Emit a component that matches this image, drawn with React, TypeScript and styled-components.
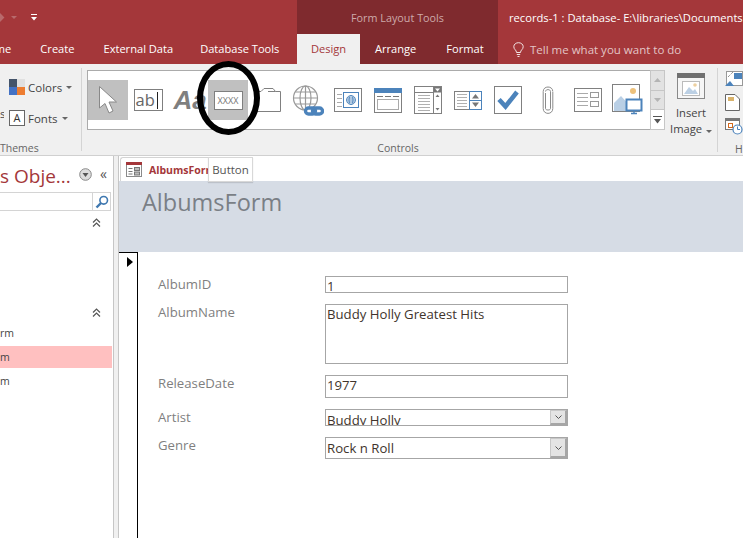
import * as React from 'react';
import styled, { createGlobalStyle } from 'styled-components';

const RED = '#a4373a';
const DARK_RED = '#7f2a2e';
const RIBBON = '#f0f0f0';
const GREY = '#7f7f7f';
const BLUE = '#4c83bb';

const Global = createGlobalStyle`
  html, body { margin: 0; padding: 0; background: #fff; }
  body { font-family: "Open Sans", "Noto Sans", "Liberation Sans", sans-serif; }
`;

const Page = styled.div`
  position: relative;
  width: 743px;
  height: 538px;
  overflow: hidden;
  display: flex;
  flex-direction: column;
`;

// red title bar + tabs
const TitleArea = styled.div`
  height: 64px;
  flex: none;
  background: ${RED};
  display: grid;
  grid-template-columns: 297px 201px 1fr;
  grid-template-rows: 34px 30px;
  color: #fff;
  overflow: hidden;
`;

const QuickAccess = styled.div`
  display: flex;
  align-items: center;
  padding-left: 29px;
`;

const FadedDiamond = styled.span`
  width: 7px;
  height: 7px;
  margin-left: -33px;
  background: #b86a6c;
  transform: rotate(45deg);
`;

const FadedCaret = styled.span`
  margin: 1px 14px 0 8px;
  border: 3px solid transparent;
  border-top: 3px solid #b86a6c;
  border-bottom: 0;
`;

const ContextTitle = styled.div`
  background: ${DARK_RED};
  color: #cda9aa;
  font-size: 10.8px;
  display: flex;
  align-items: center;
  justify-content: center;
`;

const WindowTitle = styled.div`
  display: flex;
  align-items: center;
  padding-left: 11px;
  font-size: 11.2px;
  white-space: nowrap;
  overflow: hidden;
`;

const TabRow = styled.div<{ $dark?: boolean }>`
  display: flex;
  align-items: center;
  background: ${({ $dark }) => ($dark ? DARK_RED : 'transparent')};
  white-space: nowrap;
  overflow: hidden;
`;

const Tab = styled.div<{ $left: number }>`
  margin-left: ${({ $left }) => $left}px;
  font-size: 11.1px;
  line-height: 30px;
`;

const ActiveTab = styled.div`
  width: 63px;
  height: 30px;
  background: ${RIBBON};
  color: ${RED};
  text-align: center;
  line-height: 30px;
  font-size: 11.1px;
`;

const TellMe = styled.div`
  display: flex;
  align-items: center;
  gap: 6px;
  margin-left: 15px;
  color: #e3c5c6;
  font-size: 11.5px;
`;

// ribbon
const Ribbon = styled.div`
  height: 92px;
  flex: none;
  background: ${RIBBON};
  border-bottom: 1px solid #d0d0d0;
  box-sizing: border-box;
  display: flex;
  color: #444;
  font-size: 11.5px;
  overflow: hidden;
`;

const ThemesGroup = styled.div`
  width: 82px;
  flex: none;
  margin: 4px 0;
  border-right: 1px solid #d4d4d4;
  box-sizing: border-box;
  display: flex;
  flex-direction: column;
  padding-left: 9px;
`;

const ThemeRow = styled.div<{ $top: number }>`
  display: flex;
  align-items: center;
  gap: 3px;
  height: 16px;
  margin-top: ${({ $top }) => $top}px;
`;

const ThemesStub = styled.span`
  width: 4px;
  margin: -10px 2px 0 -9px;
  overflow: hidden;
`;

const Caret = styled.span`
  display: inline-block;
  border: 3px solid transparent;
  border-top: 3px solid #666;
  border-bottom: 0;
  margin-left: 1px;
`;

const GroupLabel = styled.div`
  color: #666;
  font-size: 10.5px;
  line-height: 14px;
`;

const ThemesLabel = styled(GroupLabel)`
  margin-top: auto;
  margin-bottom: -4px;
  margin-left: -9px;
`;

const ControlsGroup = styled.div`
  width: 578px;
  flex: none;
  margin-left: 5px;
  display: flex;
  flex-direction: column;
  padding-top: 6px;
`;

const GalleryRow = styled.div`
  display: flex;
  height: 60px;
`;

const Gallery = styled.div`
  width: 563px;
  box-sizing: border-box;
  background: #fff;
  border: 1px solid #ababab;
  border-right: 0;
  display: flex;
  align-items: center;
`;

const Cell = styled.div<{ $selected?: boolean }>`
  position: relative;
  width: 40px;
  height: 40px;
  flex: none;
  display: flex;
  align-items: center;
  justify-content: center;
  background: ${({ $selected }) => ($selected ? '#c0c0c0' : 'transparent')};
`;

const LabelControl = styled.span`
  font-family: "Liberation Sans", sans-serif;
  font-size: 26px;
  font-weight: bold;
  font-style: italic;
  color: #7f7f7f;
  white-space: nowrap;
  margin-left: 4px;
`;

const TextBoxIcon = styled.div`
  width: 29px;
  height: 22px;
  border: 1px solid #7f7f7f;
  box-sizing: border-box;
  background: #fff;
  display: flex;
  align-items: center;
  padding-left: 1px;
  color: #666;
  font-size: 16.5px;
  line-height: 20px;
`;

const Cursor = styled.span`
  width: 1px;
  height: 17px;
  margin-left: 2px;
  background: #222;
`;

const ButtonIcon = styled.div`
  width: 29px;
  height: 19px;
  border: 1px solid #7f7f7f;
  box-sizing: border-box;
  background: #fff;
  display: flex;
  align-items: center;
  justify-content: center;
  color: #777;
  font-size: 9px;
`;

const ScrollColumn = styled.div`
  width: 15px;
  display: flex;
  flex-direction: column;
  border: 1px solid #c6c6c6;
  box-sizing: border-box;
`;

const ScrollButton = styled.div<{ $white?: boolean }>`
  flex: 1;
  display: flex;
  align-items: center;
  justify-content: center;
  background: ${({ $white }) => ($white ? '#fff' : '#e2e2e2')};
  border-bottom: 1px solid #c6c6c6;
  &:last-child { border-bottom: 0; }
`;

const ControlsLabel = styled(GroupLabel)`
  text-align: center;
  margin-top: 11px;
  padding-left: 44px;
`;

const ImageGroup = styled.div`
  width: 52px;
  flex: none;
  display: flex;
  flex-direction: column;
  align-items: center;
  padding-top: 9px;
  font-size: 11.2px;
  line-height: 16px;
`;

const ImageText = styled.div`
  margin-top: 6px;
  text-align: center;
  white-space: nowrap;
`;

const HeaderGroup = styled.div`
  margin: 4px 0 3px;
  padding: 2px 0 0 7px;
  flex: 1;
  border-left: 1px solid #d4d4d4;
  display: flex;
  flex-direction: column;
  gap: 7px;
`;

const HLabel = styled(GroupLabel)`
  margin-left: 10px;
`;

// below the ribbon
const Body = styled.div`
  flex: 1;
  min-height: 0;
  display: flex;
`;

const NavPane = styled.div`
  width: 113px;
  flex: none;
  background: #fff;
  display: flex;
  flex-direction: column;
`;

const NavHeader = styled.div`
  height: 36px;
  display: flex;
  align-items: center;
  color: ${RED};
  font-size: 19px;
  white-space: nowrap;
`;

const NavTitle = styled.span`
  width: 79px;
  margin-top: 4px;
  overflow: hidden;
`;

const ShutterChevrons = styled.span`
  margin-left: 8px;
  color: #555;
  font-size: 14px;
  line-height: 14px;
`;

const SearchBox = styled.div`
  height: 19px;
  width: 111px;
  box-sizing: border-box;
  border: 1px solid #d4d4d4;
  border-left: 0;
  display: flex;
  justify-content: flex-end;
`;

const SearchButton = styled.div`
  width: 17px;
  border-left: 1px solid #d4d4d4;
  display: flex;
  align-items: center;
  justify-content: center;
`;

const NavSection = styled.div<{ $height: number }>`
  height: ${({ $height }) => $height}px;
  display: flex;
  justify-content: flex-end;
  padding: 7px 12px 0 0;
  box-sizing: border-box;
`;

const NavItem = styled.div<{ $selected?: boolean }>`
  height: 22px;
  width: 112px;
  margin-bottom: 2px;
  background: ${({ $selected }) => ($selected ? '#ffc0c0' : 'transparent')};
  color: #444;
  font-size: 10.5px;
  line-height: 22px;
`;

const Splitter = styled.div`
  width: 6px;
  flex: none;
  box-sizing: border-box;
  background: #f0f0f0;
  border-left: 1px solid #c6c6c6;
  border-right: 1px solid #c6c6c6;
`;

const Document = styled.div`
  flex: 1;
  min-width: 0;
  display: flex;
  flex-direction: column;
`;

const DocTabs = styled.div`
  height: 25px;
  flex: none;
  padding: 1px 0 0 1px;
  box-sizing: border-box;
  display: flex;
`;

const DocTab = styled.div`
  width: 89px;
  box-sizing: border-box;
  border: 1px solid #d4d4d4;
  border-right: 0;
  border-bottom: 0;
  border-top-left-radius: 3px;
  display: flex;
  align-items: center;
  gap: 7px;
  padding-left: 5px;
  color: ${RED};
  font-size: 10.5px;
  font-weight: bold;
  white-space: nowrap;
  overflow: hidden;
`;

const FormHeader = styled.div`
  height: 71px;
  flex: none;
  background: #d6dce5;
  color: #7a7f86;
  font-size: 23.5px;
  line-height: 42px;
  padding-left: 23px;
`;

const FormDetail = styled.div`
  flex: 1;
  display: flex;
  min-height: 0;
`;

const RecordSelector = styled.div`
  width: 19px;
  flex: none;
  box-sizing: border-box;
  border-top: 1px solid #000;
  border-right: 1px solid #000;
  padding: 4px 0 0 8px;
`;

const Pointer = styled.div`
  width: 0;
  height: 0;
  border-left: 6px solid #000;
  border-top: 5px solid transparent;
  border-bottom: 5px solid transparent;
`;

const FieldGrid = styled.div`
  display: grid;
  grid-template-columns: 167px 243px;
  row-gap: 11px;
  align-content: start;
  padding: 24px 0 0 20px;
`;

const FieldLabel = styled.div`
  color: ${GREY};
  font-size: 13.2px;
  line-height: 17px;
`;

const FieldBox = styled.div<{ $height: number }>`
  height: ${({ $height }) => $height}px;
  box-sizing: border-box;
  border: 1px solid #a6a6a6;
  padding-left: 1px;
  color: #41342c;
  font-size: 13.2px;
  line-height: 18px;
  display: flex;
  justify-content: space-between;
  overflow: hidden;
`;

const FieldValue = styled.span<{ $drop: number }>`
  padding-top: ${({ $drop }) => $drop}px;
`;

const ComboButton = styled.div`
  width: 17px;
  flex: none;
  background: #e4e4e4;
  border: 1px solid #c8c8c8;
  border-right: 2px solid #a6a6a6;
  border-bottom: 2px solid #a6a6a6;
  box-sizing: border-box;
  display: flex;
  align-items: center;
  justify-content: center;
`;

// things lying over the page
const Tooltip = styled.div`
  position: absolute;
  left: 208px;
  top: 157px;
  width: 45px;
  height: 25px;
  box-sizing: border-box;
  background: #fff;
  border: 1px solid #d8d8d8;
  box-shadow: 0 1px 1px rgba(0, 0, 0, 0.12);
  color: #555;
  font-size: 11.5px;
  line-height: 24px;
  text-align: center;
`;

const HandDrawnOval = styled.div`
  position: absolute;
  left: 197px;
  top: 61px;
  width: 63px;
  height: 74px;
  box-sizing: border-box;
  border: 6px solid #000;
  border-radius: 50%;
`;

// icons
const Svg: React.FC<{ w: number; h: number; children: React.ReactNode }> = ({ w, h, children }) => (
  <svg width={w} height={h} viewBox={`0 0 ${w} ${h}`} style={{ display: 'block', flex: 'none' }}>
    {children}
  </svg>
);

const ArrowIcon = () => (
  <Svg w={20} h={30}>
    <path d="M1.5 1.5 V23 L7 18.5 L11 28 L15 26 L11 17 H18.5 Z" fill="#fff" stroke="#888" strokeWidth="1" />
  </Svg>
);

const TabIcon = () => (
  <Svg w={28} h={24}>
    <path d="M1.5 23.5 V3.5 H7 L10 .5 H19 L21.5 3.5 H26.5 V23.5 Z" fill="#fff" stroke="#808080" />
    <path d="M14 3.5 H21.5" stroke="#808080" fill="none" />
  </Svg>
);

const GlobeIcon = () => (
  <Svg w={32} h={32}>
    <g fill="none" stroke="#999" strokeWidth="1.2">
      <circle cx="13.5" cy="14" r="12" />
      <ellipse cx="13.5" cy="14" rx="5.5" ry="12" />
      <path d="M1.5 14 H25.5 M3.5 8 H23.5 M3.5 20 H23.5 M13.5 2 V26" />
    </g>
    <g fill="none" stroke={BLUE} strokeWidth="3.4">
      <rect x="13.5" y="24" width="10" height="6" rx="3" fill="#fff" />
      <rect x="20.5" y="24" width="10" height="6" rx="3" />
    </g>
  </Svg>
);

const WebBrowserIcon = () => (
  <Svg w={28} h={24}>
    <rect x=".5" y=".5" width="27" height="23" fill="#fff" stroke="#808080" />
    <path d="M3 6.5H8M3 10.5H8M3 14.5H8M3 18.5H8" stroke="#aaa" />
    <rect x="9.5" y="4.5" width="15" height="15" fill="#fff" stroke={BLUE} />
    <g fill="none" stroke={BLUE} strokeWidth=".9">
      <circle cx="17" cy="12" r="4.5" />
      <ellipse cx="17" cy="12" rx="2" ry="4.5" />
      <path d="M12.5 12H21.5M13 10H21M13 14H21" />
    </g>
  </Svg>
);

const NavControlIcon = () => (
  <Svg w={28} h={25}>
    <rect x=".5" y=".5" width="27" height="24" fill="#fff" stroke="#808080" />
    <rect x="0" y="0" width="28" height="5" fill={BLUE} />
    <path d="M3 8.5H9M11 8.5H17M19 8.5H25" stroke="#777" />
    <rect x="3.5" y="11.5" width="21" height="10" fill="#fff" stroke="#aaa" />
  </Svg>
);

const ListBoxIcon = () => (
  <Svg w={28} h={28}>
    <rect x=".5" y=".5" width="27" height="27" fill="#fff" stroke="#808080" />
    <path d="M1 6.5H19M19.5 1V27" stroke="#808080" />
    <rect x="20" y="1" width="7" height="5.5" fill="#777" />
    <path d="M21 2.5H26L23.5 5.5Z" fill="#fff" />
    <path d="M21.5 11L23.5 8.5L25.5 11ZM21.5 22L23.5 24.5L25.5 22Z" fill="#777" />
    <path d="M4 9.5H16M4 12.5H16M4 15.5H16M4 18.5H16M4 21.5H16M4 24.5H16" stroke="#b0b0b0" />
  </Svg>
);

const ComboIcon = () => (
  <Svg w={28} h={19}>
    <rect x=".5" y=".5" width="27" height="18" fill="#fff" stroke="#808080" />
    <path d="M3 3.5H13M3 6.5H13M3 9.5H13M3 12.5H13M3 15.5H13" stroke="#b0b0b0" />
    <rect x="15.5" y=".5" width="12" height="18" fill="#fff" stroke={BLUE} />
    <path d="M16 9.5H27" stroke={BLUE} />
    <path d="M18 7.5L21.5 3L25 7.5ZM18 11.5L21.5 16L25 11.5Z" fill="#777" />
  </Svg>
);

const CheckIcon = () => (
  <Svg w={28} h={28}>
    <rect x=".5" y=".5" width="27" height="27" fill="#fff" stroke="#808080" />
    <path d="M5 13.5L11.5 20.5L23 6" fill="none" stroke={BLUE} strokeWidth="4.6" />
  </Svg>
);

const ClipIcon = () => (
  <Svg w={12} h={28}>
    <path
      d="M3.5 7V22.5C3.5 24.5 8.5 24.5 8.5 22.5V5.5C8.5 3 3.5 3 3.5 5.5M10.8 6V22.5C10.8 29 1.2 29 1.2 22.5V5.5C1.2 -0.5 10.8 -0.5 10.8 5.5"
      fill="none"
      stroke="#8a8a8a"
    />
  </Svg>
);

const SubformIcon = () => (
  <Svg w={28} h={24}>
    <rect x=".5" y=".5" width="27" height="23" fill="#fff" stroke="#808080" />
    <path d="M3 5.5H14M3 9.5H14M3 13.5H14M3 17.5H14" stroke="#aaa" />
    <rect x="16.5" y="4.5" width="8" height="5" fill="#fff" stroke="#999" />
    <rect x="16.5" y="13.5" width="8" height="5" fill="#fff" stroke="#999" />
  </Svg>
);

const ObjectIcon = () => (
  <Svg w={32} h={32}>
    <rect x=".5" y=".5" width="27" height="27" fill="#fff" stroke="#808080" />
    <circle cx="21" cy="7" r="3" fill="#edc17b" />
    <path d="M2 27V19L9 12L20 24V27Z" fill="#b9cfe5" />
    <rect x="14.5" y="15.5" width="15" height="11" fill="#fff" stroke={BLUE} strokeWidth="2" />
    <path d="M19 29.5H25M22 27V30" stroke={BLUE} strokeWidth="1.4" />
  </Svg>
);

const InsertImageIcon = () => (
  <Svg w={28} h={26}>
    <rect x=".5" y=".5" width="27" height="25" fill="#f6f6f6" stroke="#8a8a8a" />
    <rect x="0" y="0" width="28" height="5" fill="#707070" />
    <rect x="5.5" y="8.5" width="17" height="14" fill="#fff" stroke="#bbb" />
    <circle cx="18" cy="12" r="1.8" fill="#edd0a0" />
    <path d="M7 21L12 14L16 18L18 16L21 21Z" fill="#bcd0e4" />
  </Svg>
);

const ThemeColorsIcon = () => (
  <Svg w={16} h={16}>
    <rect width="8" height="8" fill="#44546a" />
    <rect x="8" width="8" height="8" fill="#e0e0e0" />
    <rect y="8" width="8" height="8" fill="#4472c4" />
    <rect x="8" y="8" width="8" height="8" fill="#ed7d31" />
  </Svg>
);

const ThemeFontsIcon = styled.div`
  width: 16px;
  height: 16px;
  box-sizing: border-box;
  border: 1px solid #666;
  background: #fff;
  color: #333;
  font-size: 11px;
  line-height: 14px;
  text-align: center;
  flex: none;
`;

const LogoIcon = () => (
  <Svg w={19} h={17}>
    <rect x="1.5" y="1.5" width="16" height="14" fill="#fff" stroke="#999" />
    <rect x="9" y="3" width="8" height="6" fill={BLUE} />
    <path d="M0 16L5 11L9 16Z" fill={BLUE} />
    <path d="M3 7L8 2" stroke="#666" strokeDasharray="1 1" />
  </Svg>
);

const TitleIcon = () => (
  <Svg w={15} h={17}>
    <path d="M.5.5H10L14.5 5V16.5H.5Z" fill="#fff" stroke="#666" />
    <rect x="3" y="3" width="6" height="4" fill="#d9b36c" />
  </Svg>
);

const DateIcon = () => (
  <Svg w={18} h={17}>
    <rect x=".5" y=".5" width="14" height="11" fill="#fff" stroke="#777" />
    <rect width="15" height="3" fill="#777" />
    <rect x="3.5" y="5.5" width="4" height="4" fill="#fff" stroke="#d2691e" />
    <circle cx="12.5" cy="11.5" r="4.5" fill="#fff" stroke={BLUE} strokeWidth="1.2" />
    <path d="M12.5 8.5V11.5H15" fill="none" stroke={BLUE} />
  </Svg>
);

const ScrollArrow = ({ up }: { up?: boolean }) => (
  <Svg w={7} h={4}>
    <path d={up ? 'M0 4L3.5 0L7 4Z' : 'M0 0L3.5 4L7 0Z'} fill="#b4b4b4" />
  </Svg>
);

const MoreArrow = () => (
  <Svg w={9} h={8}>
    <path d="M0 .5H9" stroke="#555" />
    <path d="M1 3L4.5 7.5L8 3Z" fill="#555" />
  </Svg>
);

const Bulb = () => (
  <Svg w={11} h={15}>
    <path
      d="M3.5 10.5C3.5 8 .8 7.5 .8 4.7C.8 2.3 3 .7 5.5 .7C8 .7 10.2 2.3 10.2 4.7C10.2 7.5 7.5 8 7.5 10.5ZM3.8 12.5H7.2M4.5 14.5H6.5"
      fill="none"
      stroke="#f2e4e4"
    />
  </Svg>
);

const CustomizeGlyph = () => (
  <Svg w={6} h={7}>
    <path d="M0 .5H6" stroke="#fff" />
    <path d="M0 3H6L3 6.5Z" fill="#fff" />
  </Svg>
);

const PaneMenuIcon = () => (
  <Svg w={13} h={13}>
    <circle cx="6.5" cy="6.5" r="5.8" fill="#ddd" stroke="#888" />
    <path d="M3.5 5H9.5L6.5 9Z" fill="#555" />
  </Svg>
);

const SearchGlyph = () => (
  <Svg w={14} h={14}>
    <circle cx="8.7" cy="5.3" r="3.8" fill="none" stroke="#3f78b0" strokeWidth="1.6" />
    <path d="M6 8L1.5 12.5" stroke="#3f78b0" strokeWidth="2.4" />
  </Svg>
);

const FormTabIcon = () => (
  <Svg w={16} h={15}>
    <rect x=".5" y=".5" width="15" height="14" fill="#fff" stroke="#8a8a8a" />
    <rect width="16" height="3" fill={RED} />
    <path d="M2.5 6.5H6.5M2.5 9.5H6.5M2.5 12H6.5" stroke="#777" />
    <rect x="8.5" y="5.5" width="5" height="3" fill="#bbb" stroke="#777" />
    <rect x="8.5" y="10" width="5" height="3" fill="#bbb" stroke="#777" />
  </Svg>
);

const ShutterGlyph = () => (
  <Svg w={9} h={9}>
    <path d="M1 4.5L4.5 1L8 4.5M1 8.5L4.5 5L8 8.5" fill="none" stroke="#555" strokeWidth="1.2" />
  </Svg>
);

const ComboChevron = () => (
  <Svg w={7} h={4}>
    <path d="M.5 .5L3.5 3.5L6.5 .5" fill="none" stroke="#555" />
  </Svg>
);

const fields: { label: string; value: string; height: number; combo?: boolean }[] = [
  { label: 'AlbumID', value: '1', height: 17 },
  { label: 'AlbumName', value: 'Buddy Holly Greatest Hits', height: 60 },
  { label: 'ReleaseDate', value: '1977', height: 23 },
  { label: 'Artist', value: 'Buddy Holly', height: 17, combo: true },
  { label: 'Genre', value: 'Rock n Roll', height: 22, combo: true },
];

export default function App() {
  return (
    <Page>
      <Global />
      <TitleArea>
        <QuickAccess>
          <FadedDiamond />
          <FadedCaret />
          <CustomizeGlyph />
        </QuickAccess>
        <ContextTitle>Form Layout Tools</ContextTitle>
        <WindowTitle>records-1 : Database- E:\libraries\Documents</WindowTitle>
        <TabRow>
          <Tab $left={-20}>Home</Tab>
          <Tab $left={29}>Create</Tab>
          <Tab $left={29}>External Data</Tab>
          <Tab $left={27}>Database Tools</Tab>
        </TabRow>
        <TabRow $dark>
          <ActiveTab>Design</ActiveTab>
          <Tab $left={15}>Arrange</Tab>
          <Tab $left={30}>Format</Tab>
        </TabRow>
        <TabRow>
          <TellMe>
            <Bulb />
            Tell me what you want to do
          </TellMe>
        </TabRow>
      </TitleArea>

      <Ribbon>
        <ThemesGroup>
          <ThemeRow $top={11}>
            <ThemeColorsIcon />
            Colors <Caret />
          </ThemeRow>
          <ThemeRow $top={15}>
            <ThemesStub>s</ThemesStub>
            <ThemeFontsIcon>A</ThemeFontsIcon>
            Fonts <Caret />
          </ThemeRow>
          <ThemesLabel>Themes</ThemesLabel>
        </ThemesGroup>

        <ControlsGroup>
          <GalleryRow>
            <Gallery>
              <Cell $selected><ArrowIcon /></Cell>
              <Cell><TextBoxIcon>ab<Cursor /></TextBoxIcon></Cell>
              <Cell><LabelControl>Aa</LabelControl></Cell>
              <Cell $selected><ButtonIcon>XXXX</ButtonIcon></Cell>
              <Cell><TabIcon /></Cell>
              <Cell><GlobeIcon /></Cell>
              <Cell><WebBrowserIcon /></Cell>
              <Cell><NavControlIcon /></Cell>
              <Cell><ListBoxIcon /></Cell>
              <Cell><ComboIcon /></Cell>
              <Cell><CheckIcon /></Cell>
              <Cell><ClipIcon /></Cell>
              <Cell><SubformIcon /></Cell>
              <Cell><ObjectIcon /></Cell>
            </Gallery>
            <ScrollColumn>
              <ScrollButton><ScrollArrow up /></ScrollButton>
              <ScrollButton><ScrollArrow /></ScrollButton>
              <ScrollButton $white><MoreArrow /></ScrollButton>
            </ScrollColumn>
          </GalleryRow>
          <ControlsLabel>Controls</ControlsLabel>
        </ControlsGroup>

        <ImageGroup>
          <InsertImageIcon />
          <ImageText>
            Insert
            <br />
            Image <Caret />
          </ImageText>
        </ImageGroup>

        <HeaderGroup>
          <LogoIcon />
          <TitleIcon />
          <DateIcon />
          <HLabel>H</HLabel>
        </HeaderGroup>
      </Ribbon>

      <Body>
        <NavPane>
          <NavHeader>
            <NavTitle>s Obje...</NavTitle>
            <PaneMenuIcon />
            <ShutterChevrons>«</ShutterChevrons>
          </NavHeader>
          <SearchBox>
            <SearchButton><SearchGlyph /></SearchButton>
          </SearchBox>
          <NavSection $height={90}><ShutterGlyph /></NavSection>
          <NavSection $height={21}><ShutterGlyph /></NavSection>
          <NavItem>rm</NavItem>
          <NavItem $selected>m</NavItem>
          <NavItem>m</NavItem>
        </NavPane>
        <Splitter />
        <Document>
          <DocTabs>
            <DocTab>
              <FormTabIcon />
              AlbumsForm
            </DocTab>
          </DocTabs>
          <FormHeader>AlbumsForm</FormHeader>
          <FormDetail>
            <RecordSelector><Pointer /></RecordSelector>
            <FieldGrid>
              {fields.map((f) => (
                <React.Fragment key={f.label}>
                  <FieldLabel>{f.label}</FieldLabel>
                  <FieldBox $height={f.height}>
                    <FieldValue $drop={f.combo ? 1 : 0}>{f.value}</FieldValue>
                    {f.combo ? <ComboButton><ComboChevron /></ComboButton> : null}
                  </FieldBox>
                </React.Fragment>
              ))}
            </FieldGrid>
          </FormDetail>
        </Document>
      </Body>

      <Tooltip>Button</Tooltip>
      <HandDrawnOval />
    </Page>
  );
}
